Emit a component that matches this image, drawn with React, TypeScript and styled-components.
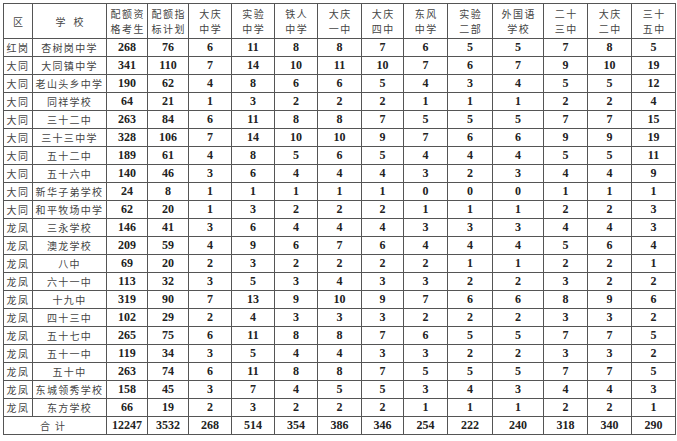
import { FC } from "react"
import styled, { createGlobalStyle } from "styled-components"

const GlobalStyle = createGlobalStyle`
  body {
    margin: 0;
    background: #fff;
  }
`

const Page = styled.div`
  padding: 3px 0 0 3px;
`

const Table = styled.table`
  border-collapse: collapse;
  table-layout: fixed;
  width: 672px;
  border: 1.5px solid #333;
  font-family: "Liberation Serif", "Noto Sans CJK SC", serif;
  color: #2a2a2a;
`

const HeadRow = styled.tr`
  height: 35px;
`

const Row = styled.tr`
  height: 18px;
`

const HeadCell = styled.th<{ $wide?: boolean }>`
  border: 1px solid #555;
  padding: 0;
  font-family: "Noto Sans CJK SC", sans-serif;
  font-weight: 400;
  font-size: 10px;
  line-height: 15px;
  letter-spacing: ${p => (p.$wide ? "8px" : "1.5px")};
  text-indent: ${p => (p.$wide ? "8px" : "1.5px")};
  color: #444;
  text-align: center;
  vertical-align: middle;
`

const Cell = styled.td<{ $kind: "zone" | "name" | "num" | "total" }>`
  border: 1px solid #555;
  padding: 0;
  text-align: center;
  vertical-align: middle;
  white-space: nowrap;
  overflow: hidden;
  line-height: 17px;
  font-family: ${p => (p.$kind === "num" ? `"Liberation Serif", serif` : `"Noto Sans CJK SC", sans-serif`)};
  font-weight: ${p => (p.$kind === "num" ? 700 : 400)};
  font-size: ${p => (p.$kind === "num" ? "12px" : "10px")};
  letter-spacing: ${p =>
    p.$kind === "name" ? "1.3px" : p.$kind === "zone" ? "1.5px" : p.$kind === "total" ? "5px" : "0"};
  color: ${p => (p.$kind === "num" ? "#222" : "#444")};
`

const widths = [29, 74, 41, 41, 43, 43, 43, 44, 42, 44, 45, 51, 44, 44, 44]

const headers = [
  ["区"],
  ["学校"],
  ["配额资", "格考生"],
  ["配额指", "标计划"],
  ["大庆", "中学"],
  ["实验", "中学"],
  ["铁人", "中学"],
  ["大庆", "一中"],
  ["大庆", "四中"],
  ["东风", "中学"],
  ["实验", "二部"],
  ["外国语", "学校"],
  ["二十", "三中"],
  ["大庆", "二中"],
  ["三十", "五中"],
]

const rows: [string, string, number[]][] = [
  ["红岗", "杏树岗中学", [268, 76, 6, 11, 8, 8, 7, 6, 5, 5, 7, 8, 5]],
  ["大同", "大同镇中学", [341, 110, 7, 14, 10, 11, 10, 7, 6, 7, 9, 10, 19]],
  ["大同", "老山头乡中学", [190, 62, 4, 8, 6, 6, 5, 4, 3, 4, 5, 5, 12]],
  ["大同", "同祥学校", [64, 21, 1, 3, 2, 2, 2, 1, 1, 1, 2, 2, 4]],
  ["大同", "三十二中", [263, 84, 6, 11, 8, 8, 7, 5, 5, 5, 7, 7, 15]],
  ["大同", "三十三中学", [328, 106, 7, 14, 10, 10, 9, 7, 6, 6, 9, 9, 19]],
  ["大同", "五十二中", [189, 61, 4, 8, 5, 6, 5, 4, 4, 4, 5, 5, 11]],
  ["大同", "五十六中", [140, 46, 3, 6, 4, 4, 4, 3, 2, 3, 4, 4, 9]],
  ["大同", "新华子弟学校", [24, 8, 1, 1, 1, 1, 1, 0, 0, 0, 1, 1, 1]],
  ["大同", "和平牧场中学", [62, 20, 1, 3, 2, 2, 2, 1, 1, 1, 2, 2, 3]],
  ["龙凤", "三永学校", [146, 41, 3, 6, 4, 4, 4, 3, 3, 3, 4, 4, 3]],
  ["龙凤", "澳龙学校", [209, 59, 4, 9, 6, 7, 6, 4, 4, 4, 5, 6, 4]],
  ["龙凤", "八中", [69, 20, 2, 3, 2, 2, 2, 2, 1, 1, 2, 2, 1]],
  ["龙凤", "六十一中", [113, 32, 3, 5, 3, 4, 3, 3, 2, 2, 3, 2, 2]],
  ["龙凤", "十九中", [319, 90, 7, 13, 9, 10, 9, 7, 6, 6, 8, 9, 6]],
  ["龙凤", "四十三中", [102, 29, 2, 4, 3, 3, 3, 2, 2, 2, 3, 3, 2]],
  ["龙凤", "五十七中", [265, 75, 6, 11, 8, 8, 7, 6, 5, 5, 7, 7, 5]],
  ["龙凤", "五十一中", [119, 34, 3, 5, 4, 4, 3, 3, 2, 2, 3, 3, 2]],
  ["龙凤", "五十中", [263, 74, 6, 11, 8, 8, 7, 5, 5, 5, 7, 7, 5]],
  ["龙凤", "东城领秀学校", [158, 45, 3, 7, 4, 5, 5, 3, 4, 3, 4, 4, 3]],
  ["龙凤", "东方学校", [66, 19, 2, 3, 2, 2, 2, 1, 1, 1, 2, 2, 1]],
]

const totals = [12247, 3532, 268, 514, 354, 386, 346, 254, 222, 240, 318, 340, 290]

const App: FC = () => {
  return (
    <>
      <GlobalStyle />
      <Page>
        <Table>
          <colgroup>
            {widths.map((w, i) => (
              <col key={i} style={{ width: w }} />
            ))}
          </colgroup>
          <thead>
            <HeadRow>
              {headers.map((lines, i) => (
                <HeadCell key={i} $wide={i === 1}>
                  {lines.map((l, j) => (
                    <div key={j}>{l}</div>
                  ))}
                </HeadCell>
              ))}
            </HeadRow>
          </thead>
          <tbody>
            {rows.map(([zone, name, nums], i) => (
              <Row key={i}>
                <Cell $kind="zone">{zone}</Cell>
                <Cell $kind="name">{name}</Cell>
                {nums.map((n, j) => (
                  <Cell key={j} $kind="num">{n}</Cell>
                ))}
              </Row>
            ))}
            <Row>
              <Cell $kind="total" colSpan={2}>合计</Cell>
              {totals.map((n, j) => (
                <Cell key={j} $kind="num">{n}</Cell>
              ))}
            </Row>
          </tbody>
        </Table>
      </Page>
    </>
  )
}

export default App
